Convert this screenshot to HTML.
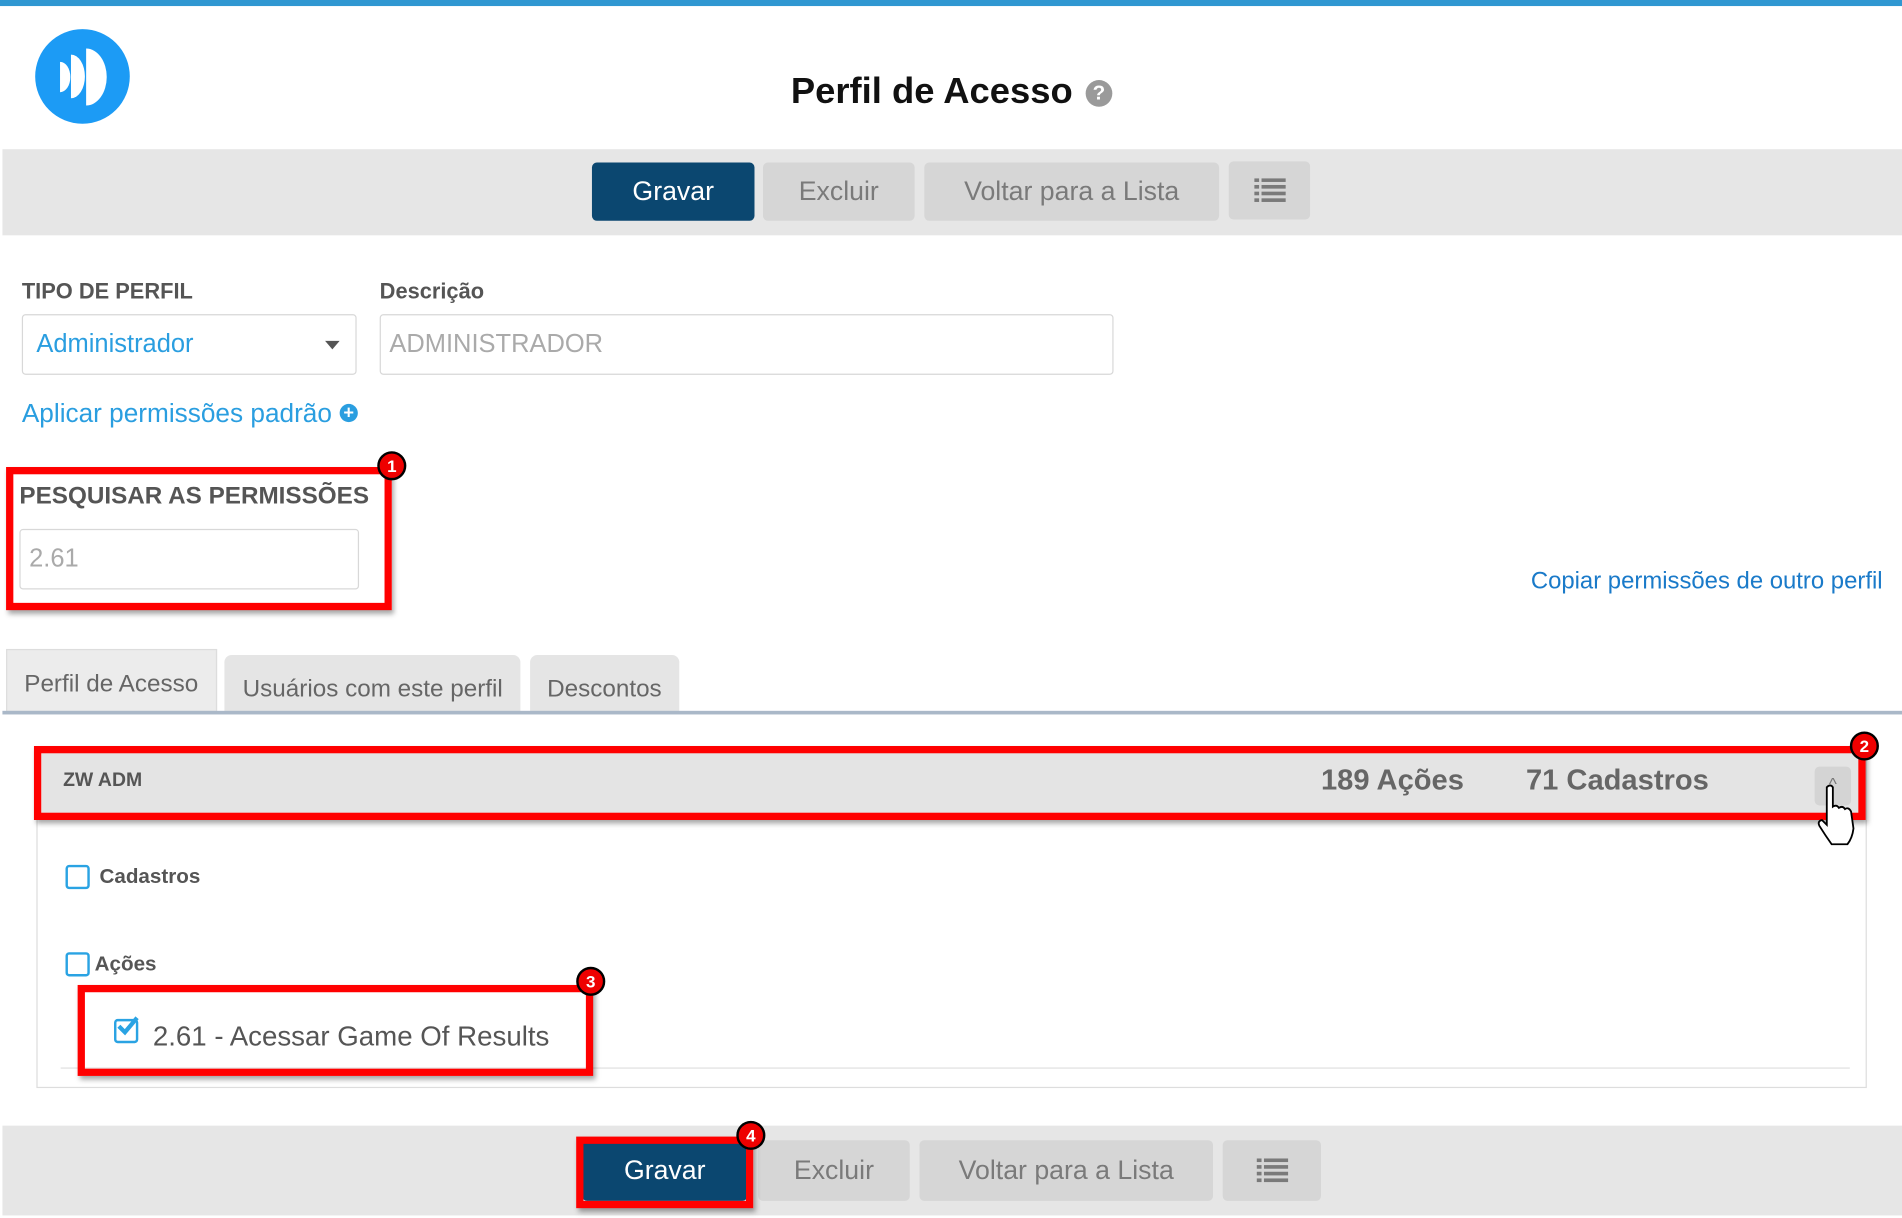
<!DOCTYPE html>
<html><head><meta charset="utf-8"><style>
html,body{margin:0;padding:0;background:#fff;width:1902px;height:1218px;overflow:hidden}
#w{position:absolute;left:0;top:0;width:1568px;height:1004px;transform:scale(1.21301);transform-origin:0 0;font-family:"Liberation Sans",sans-serif}
.a{position:absolute}
.btn{position:absolute;border-radius:4px;background:#d6d6d6;color:#7a7a7a;font-size:22px;display:flex;align-items:center;justify-content:center}
.g{background:#0b4770;color:#fff}
.red{position:absolute;border:6px solid #f00;box-shadow:2px 3px 4px rgba(0,0,0,.35)}
.badge{position:absolute;width:20px;height:20px;border-radius:50%;background:#e00;border:2px solid #000;color:#fff;font-size:14px;font-weight:bold;display:flex;align-items:center;justify-content:center}
.inp{position:absolute;border:1px solid #d8d8d8;border-radius:3px;background:#fff;box-sizing:border-box}
.cb{position:absolute;width:16px;height:16px;border:2px solid #2aa3e3;border-radius:3px;background:#fff}
</style></head><body><div id="w">
<div class="a" style="left:0;top:0;width:1568px;height:5px;background:#2f97d1"></div>
<svg class="a" style="left:0;top:0" width="140" height="120">
<circle cx="68" cy="63" r="39" fill="#1c9bf5"/>
<path d="M49.5 51 A8.5 12.5 0 0 1 49.5 76 Z" fill="#fff"/>
<path d="M58.5 45 A11.5 18 0 0 1 58.5 81 Z" fill="#fff"/>
<path d="M71 40 A17 23.5 0 0 1 71 87 Z" fill="#fff"/>
</svg>
<div class="a" style="left:652px;top:59px;font-size:30px;font-weight:bold;color:#111">Perfil de Acesso</div>
<div class="a" style="left:895px;top:66px;width:22px;height:22px;border-radius:50%;background:#9a9a9a;color:#fff;font-size:17px;font-weight:bold;text-align:center;line-height:22px">?</div>

<div class="a" style="left:2px;top:123px;width:1566px;height:71px;background:#e6e6e6"></div>
<div class="btn g" style="left:488px;top:134px;width:134px;height:48px">Gravar</div>
<div class="btn" style="left:629px;top:134px;width:125px;height:48px">Excluir</div>
<div class="btn" style="left:762px;top:134px;width:243px;height:48px">Voltar para a Lista</div>
<div class="btn" style="left:1013px;top:133px;width:67px;height:48px"><svg width="26" height="20"><g fill="#7a7a7a"><rect x="0" y="0" width="4" height="3"/><rect x="6" y="0" width="20" height="3"/><rect x="0" y="5.5" width="4" height="3"/><rect x="6" y="5.5" width="20" height="3"/><rect x="0" y="11" width="4" height="3"/><rect x="6" y="11" width="20" height="3"/><rect x="0" y="16.5" width="4" height="3"/><rect x="6" y="16.5" width="20" height="3"/></g></svg></div>

<div class="a" style="left:18px;top:230px;font-size:18px;font-weight:bold;color:#555">TIPO DE PERFIL</div>
<div class="a" style="left:313px;top:230px;font-size:18px;font-weight:bold;color:#555">Descrição</div>
<div class="inp" style="left:18px;top:259px;width:276px;height:50px"></div>
<div class="a" style="left:30px;top:272px;font-size:21px;color:#2a9ee0">Administrador</div>
<div class="a" style="left:268px;top:281px;width:0;height:0;border-left:6px solid transparent;border-right:6px solid transparent;border-top:7px solid #555"></div>
<div class="inp" style="left:313px;top:259px;width:605px;height:50px"></div>
<div class="a" style="left:321px;top:272px;font-size:21px;color:#aaa">ADMINISTRADOR</div>
<div class="a" style="left:18px;top:328px;font-size:21.6px;color:#2a9ee0">Aplicar permissões padrão</div>
<div class="a" style="left:280px;top:333px;width:15px;height:15px;border-radius:50%;background:#2a9ee0;color:#fff;font-size:15px;font-weight:bold;line-height:15px;text-align:center">+</div>

<div class="a" style="left:16px;top:398px;font-size:20px;font-weight:bold;color:#555">PESQUISAR AS PERMISSÕES</div>
<div class="inp" style="left:16px;top:436px;width:280px;height:50px"></div>
<div class="a" style="left:24px;top:449px;font-size:21px;color:#aaa">2.61</div>
<div class="red" style="left:5px;top:385px;width:306px;height:106px"></div>
<div class="badge" style="left:311px;top:372px">1</div>
<div class="a" style="left:1262px;top:468px;font-size:19.7px;color:#1a7ac9">Copiar permissões de outro perfil</div>

<div class="a" style="left:5px;top:535px;width:174px;height:52px;background:#ececec;border:1px solid #ddd;box-sizing:border-box"></div>
<div class="a" style="left:20px;top:553px;font-size:20px;color:#666">Perfil de Acesso</div>
<div class="a" style="left:185px;top:540px;width:244px;height:47px;background:#e5e5e5;border-radius:6px 6px 0 0"></div>
<div class="a" style="left:200px;top:557px;font-size:20px;color:#666">Usuários com este perfil</div>
<div class="a" style="left:437px;top:540px;width:123px;height:47px;background:#e5e5e5;border-radius:6px 6px 0 0"></div>
<div class="a" style="left:451px;top:557px;font-size:20px;color:#666">Descontos</div>
<div class="a" style="left:2px;top:586px;width:1566px;height:3px;background:#aab8c8"></div>

<div class="a" style="left:30px;top:620px;width:1509px;height:277px;border:1px solid #ddd;box-sizing:border-box"></div>
<div class="a" style="left:34px;top:621px;width:1500px;height:50px;background:#e4e4e4"></div>
<div class="a" style="left:52px;top:635px;font-size:16px;font-weight:bold;color:#555">ZW ADM</div>
<div class="a" style="left:1089px;top:630px;font-size:24px;font-weight:bold;color:#666">189 Ações</div>
<div class="a" style="left:1258px;top:630px;font-size:24px;font-weight:bold;color:#666">71 Cadastros</div>
<div class="a" style="left:1496px;top:632px;width:30px;height:32px;background:#d4d4d4;border-radius:4px;color:#777;font-size:14px;text-align:center;line-height:28px">^</div>
<div class="red" style="left:28px;top:615px;width:1498px;height:49px"></div>
<div class="badge" style="left:1525px;top:603px">2</div>
<svg class="a" style="left:1496px;top:645px" width="40" height="55"><path d="M10 4 Q13 1 15 4 L15 20 Q18 18 20 21 Q23 19 25 22 Q28 20 30 24 L32 38 Q31 46 27 51 L14 51 Q9 44 4 36 Q2 32 6 31 L10 35 Z" fill="#fff" stroke="#000" stroke-width="1.5"/></svg>

<div class="cb" style="left:54px;top:713px"></div>
<div class="a" style="left:82px;top:713px;font-size:17px;font-weight:bold;color:#555">Cadastros</div>
<div class="cb" style="left:54px;top:785px"></div>
<div class="a" style="left:78px;top:785px;font-size:17px;font-weight:bold;color:#555">Ações</div>
<div class="a" style="left:50px;top:880px;width:1475px;height:1px;background:#e0e0e0"></div>
<div class="cb" style="left:94px;top:840px"></div>
<svg class="a" style="left:94px;top:836px" width="22" height="20"><path d="M4 10 L9 15 L19 3" stroke="#2aa3e3" stroke-width="3.5" fill="none"/></svg>
<div class="a" style="left:126px;top:841px;font-size:22.8px;color:#555">2.61 - Acessar Game Of Results</div>
<div class="red" style="left:64px;top:812px;width:413px;height:63px"></div>
<div class="badge" style="left:475px;top:797px">3</div>

<div class="a" style="left:2px;top:928px;width:1566px;height:74px;background:#e6e6e6"></div>
<div class="btn g" style="left:480px;top:940px;width:136px;height:50px">Gravar</div>
<div class="btn" style="left:625px;top:940px;width:125px;height:50px">Excluir</div>
<div class="btn" style="left:758px;top:940px;width:242px;height:50px">Voltar para a Lista</div>
<div class="btn" style="left:1008px;top:940px;width:81px;height:50px"><svg width="26" height="20"><g fill="#7a7a7a"><rect x="0" y="0" width="4" height="3"/><rect x="6" y="0" width="20" height="3"/><rect x="0" y="5.5" width="4" height="3"/><rect x="6" y="5.5" width="20" height="3"/><rect x="0" y="11" width="4" height="3"/><rect x="6" y="11" width="20" height="3"/><rect x="0" y="16.5" width="4" height="3"/><rect x="6" y="16.5" width="20" height="3"/></g></svg></div>
<div class="red" style="left:475px;top:937px;width:134px;height:47px"></div>
<div class="badge" style="left:607px;top:924px">4</div>
</div></body></html>
